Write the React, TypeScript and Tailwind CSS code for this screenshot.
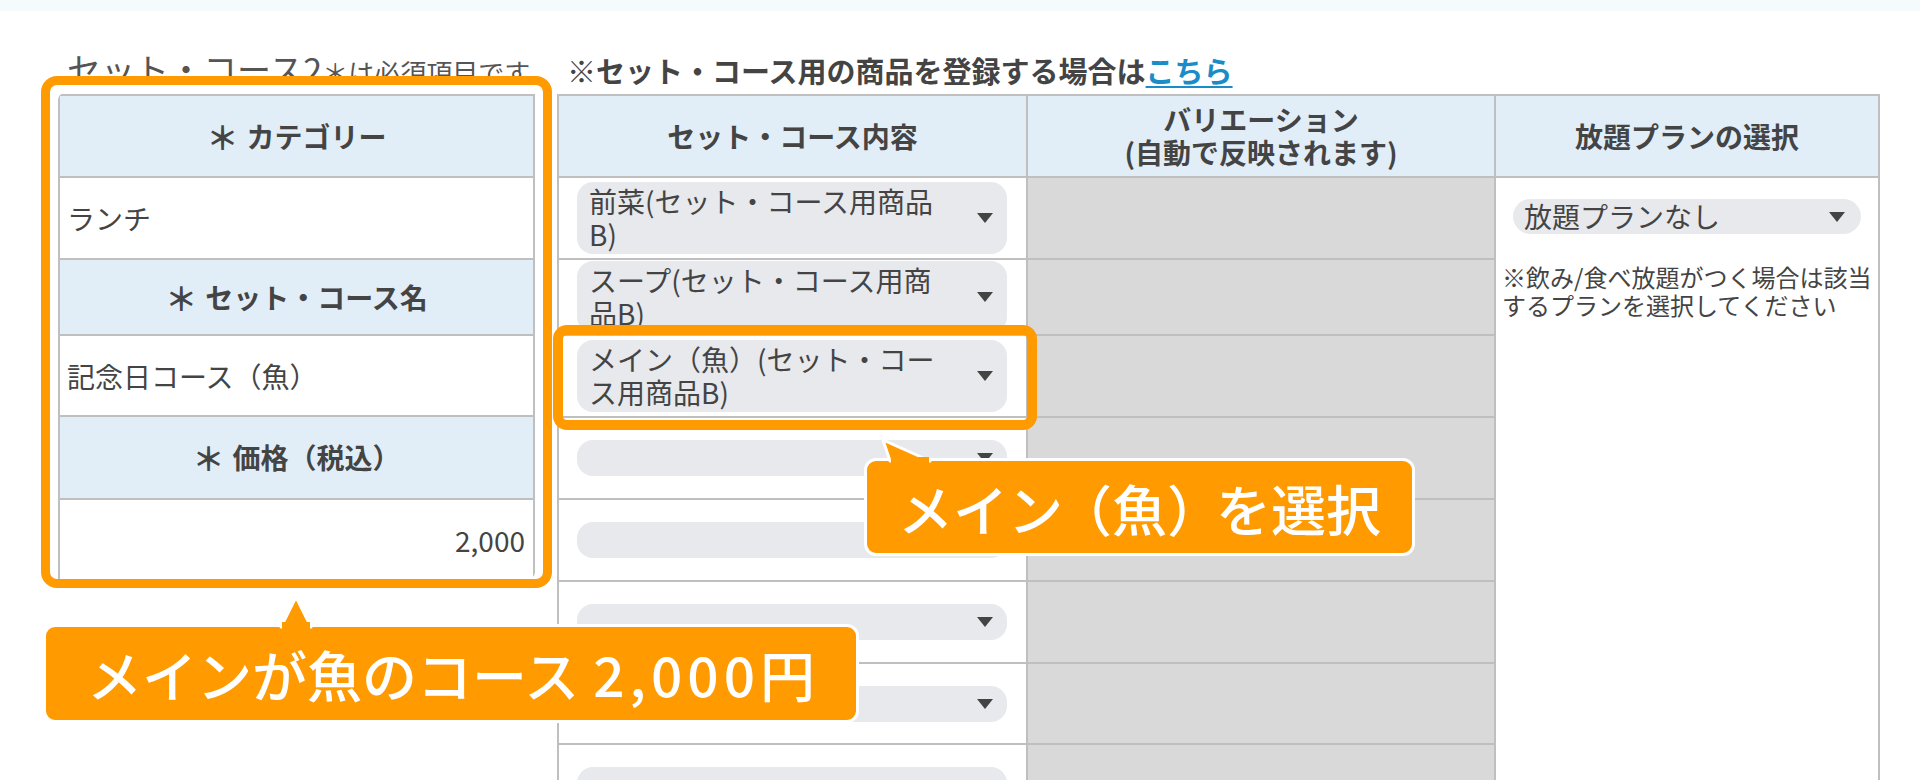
import React from 'react'

type Row = { h: string; lines?: string[] }

const ROWS: Row[] = [
  { h: 'h-[82px]', lines: ['前菜(セット・コース用商品', 'B)'] },
  { h: 'h-[76px]', lines: ['スープ(セット・コース用商', '品B)'] },
  { h: 'h-[82px]', lines: ['メイン（魚）(セット・コー', 'ス用商品B)'] },
  { h: 'h-[82px]' },
  { h: 'h-[82px]' },
  { h: 'h-[82px]' },
  { h: 'h-[81px]' },
  { h: 'h-[82px]' },
]

function Arrow() {
  return (
    <svg width="16" height="10" viewBox="0 0 16 10" className="shrink-0">
      <path d="M0 0H16L8 10Z" fill="#444" />
    </svg>
  )
}

function Select({ lines }: { lines?: string[] }) {
  if (!lines) {
    return (
      <div className="flex h-[36px] w-full items-center justify-end rounded-[16px] bg-[#e8e9ed] pr-[14px]">
        <Arrow />
      </div>
    )
  }
  return (
    <div className="flex w-full items-center rounded-[16px] bg-[#e8e9ed] py-[3px] pl-[12px] pr-[14px]">
      <div className="flex-1 whitespace-nowrap text-[28px] leading-[33px] text-[#444]">
        {lines[0]}
        <br />
        {lines[1]}
      </div>
      <Arrow />
    </div>
  )
}

function HeadCell({ children, h }: { children: React.ReactNode; h: string }) {
  return (
    <div
      className={`${h} flex items-center justify-center bg-[#e1eef8] text-[28px] font-bold leading-[33px] text-[#444]`}
    >
      {children}
    </div>
  )
}

function Req() {
  return <span className="mr-[8px] text-[32px]">＊</span>
}

export default function App() {
  return (
    <div className="relative h-[780px] w-[1920px] overflow-hidden bg-white font-['Noto_Sans_CJK_JP',sans-serif] text-[#444]">
      <div className="h-[11px] bg-[#f5fafd]" />

      <div className="flex gap-[22px] pl-[58px]">
        {/* left: category / name / price */}
        <div className="w-[477px] shrink-0">
          <div className="flex h-[83px] items-end pl-[9px]">
            <div className="-mb-[2px] whitespace-nowrap leading-[40px] text-[#555]">
              <span className="text-[34px]">セット・コース2</span>
              <span className="text-[26px]">＊は必須項目です</span>
            </div>
          </div>
          <div className="border-2 border-[#bfbfbf]">
            <HeadCell h="h-[80px]">
              <Req />
              カテゴリー
            </HeadCell>
            <div className="flex h-[82px] items-center border-t-2 border-[#bfbfbf] pl-[7px] text-[28px]">
              ランチ
            </div>
            <div className="border-t-2 border-[#bfbfbf]">
              <HeadCell h="h-[74px]">
                <Req />
                セット・コース名
              </HeadCell>
            </div>
            <div className="flex h-[81px] items-center border-t-2 border-[#bfbfbf] pl-[7px] text-[28px]">
              記念日コース（魚）
            </div>
            <div className="border-t-2 border-[#bfbfbf]">
              <HeadCell h="h-[81px]">
                <Req />
                価格（税込）
              </HeadCell>
            </div>
            <div className="flex h-[82px] items-center justify-end border-t-2 border-[#bfbfbf] pr-[8px] text-[28px]">
              2,000
            </div>
          </div>
        </div>

        {/* right: course contents */}
        <div className="w-[1323px] shrink-0">
          <div className="flex h-[83px] items-end pb-[6px] pl-[10px]">
            <div className="whitespace-nowrap text-[29px] font-bold leading-[35px] text-[#444]">
              ※セット・コース用の商品を登録する場合は
              <span className="text-[#1a8cc8] underline decoration-[2px] underline-offset-[3px]">こちら</span>
            </div>
          </div>
          <div className="flex h-[700px] border-2 border-[#bfbfbf]">
            <div className="w-[467px] shrink-0">
              <HeadCell h="h-[80px]">セット・コース内容</HeadCell>
              {ROWS.map((r, i) => (
                <div
                  key={i}
                  className={`${r.h} flex items-center border-t-2 border-[#bfbfbf] pl-[18px] pr-[19px]`}
                >
                  <Select lines={r.lines} />
                </div>
              ))}
            </div>
            <div className="w-[468px] shrink-0 border-l-2 border-[#bfbfbf]">
              <HeadCell h="h-[80px]">
                <div className="text-center">
                  バリエーション
                  <br />
                  (自動で反映されます)
                </div>
              </HeadCell>
              {ROWS.map((r, i) => (
                <div key={i} className={`${r.h} border-t-2 border-[#bfbfbf] bg-[#d9d9d9]`} />
              ))}
            </div>
            <div className="flex flex-1 flex-col border-l-2 border-[#bfbfbf]">
              <HeadCell h="h-[80px]">放題プランの選択</HeadCell>
              <div className="flex-1 border-t-2 border-[#bfbfbf] pt-[21px]">
                <div className="mx-[17px] flex h-[35px] items-center rounded-[18px] bg-[#e8e9ed] pl-[11px] pr-[16px]">
                  <span className="flex-1 text-[28px] leading-[35px]">放題プランなし</span>
                  <Arrow />
                </div>
                <div className="mt-[29px] whitespace-nowrap pl-[6px] text-[24px] leading-[28px]">
                  ※飲み/食べ放題がつく場合は該当
                  <br />
                  するプランを選択してください
                </div>
              </div>
            </div>
          </div>
        </div>
      </div>

      {/* annotation: left table highlight */}
      <div className="absolute left-[41px] top-[76px] h-[512px] w-[511px] rounded-[16px] border-[9px] border-[#ff9a00] shadow-[inset_8px_8px_0_0_#fff,inset_-8px_0_0_0_#fff]" />

      {/* annotation: main select highlight */}
      <div className="absolute left-[553px] top-[325px] h-[105px] w-[484px] rounded-[14px] border-[10px] border-[#ff9a00]" />

      {/* callout 1 */}
      <div className="absolute left-[864px] top-[458px] flex h-[98px] w-[551px] items-center justify-center rounded-[12px] border-[3px] border-white bg-[#ff9a00] text-[55px] font-medium leading-none text-white">
        メイン<span className="-mx-[6px]">（魚）</span>を選択
      </div>
      <svg className="absolute left-[876px] top-[434px]" width="62" height="32" viewBox="0 0 62 32">
        <polygon points="7,6 14,27 54,27" fill="#ff9a00" stroke="#fff" strokeWidth="3" strokeLinejoin="round" />
        <rect x="15" y="23" width="38" height="8" fill="#ff9a00" />
      </svg>

      {/* callout 2 */}
      <div className="absolute left-[43px] top-[624px] flex h-[99px] w-[816px] items-center justify-center rounded-[12px] border-[3px] border-white bg-[#ff9a00] text-[55px] font-medium leading-none text-white">
        メインが魚のコース<span className="ml-[14px] tracking-[5px]">2,000</span>円
      </div>
      <svg className="absolute left-[274px] top-[591px]" width="44" height="40" viewBox="0 0 44 40">
        <polygon points="22,6 7,36 37,36" fill="#ff9a00" stroke="#fff" strokeWidth="3" strokeLinejoin="round" />
        <rect x="8" y="31" width="28" height="8" fill="#ff9a00" />
      </svg>
    </div>
  )
}
